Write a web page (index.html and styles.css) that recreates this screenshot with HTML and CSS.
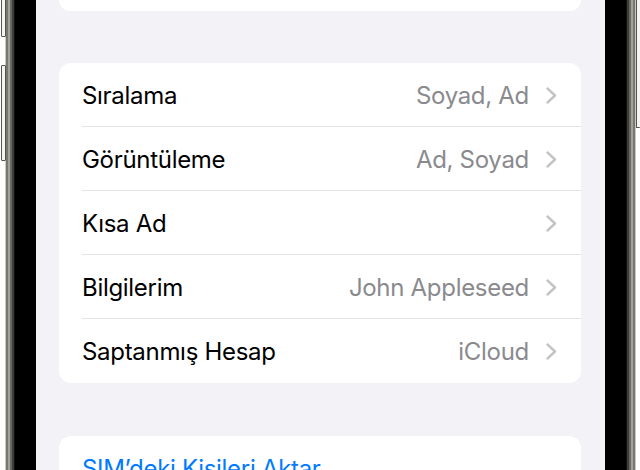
FILE: index.html
```html
<!DOCTYPE html>
<html lang="tr">
<head>
<meta charset="utf-8">
<link rel="stylesheet" href="styles.css">
</head>
<body>
<div class="phone">
  <div class="bezel bezel-left">
    <span class="btn btn-l1"></span>
    <span class="btn btn-l2"></span>
  </div>
  <main class="screen">
    <div class="card card-top"></div>
    <div class="card">
      <div class="row"><div class="row-inner"><span class="label">Sıralama</span><span class="value">Soyad, Ad</span><svg class="chev" viewBox="0 0 11 17" width="11" height="17"><path d="M1.5 1.5 L9 8.5 L1.5 15.5" fill="none" stroke="#c4c4c7" stroke-width="2.4" stroke-linecap="round" stroke-linejoin="round"/></svg></div></div>
      <div class="row"><div class="row-inner"><span class="label">Görüntüleme</span><span class="value">Ad, Soyad</span><svg class="chev" viewBox="0 0 11 17" width="11" height="17"><path d="M1.5 1.5 L9 8.5 L1.5 15.5" fill="none" stroke="#c4c4c7" stroke-width="2.4" stroke-linecap="round" stroke-linejoin="round"/></svg></div></div>
      <div class="row"><div class="row-inner"><span class="label">Kısa Ad</span><span class="value"></span><svg class="chev" viewBox="0 0 11 17" width="11" height="17"><path d="M1.5 1.5 L9 8.5 L1.5 15.5" fill="none" stroke="#c4c4c7" stroke-width="2.4" stroke-linecap="round" stroke-linejoin="round"/></svg></div></div>
      <div class="row"><div class="row-inner"><span class="label">Bilgilerim</span><span class="value">John Appleseed</span><svg class="chev" viewBox="0 0 11 17" width="11" height="17"><path d="M1.5 1.5 L9 8.5 L1.5 15.5" fill="none" stroke="#c4c4c7" stroke-width="2.4" stroke-linecap="round" stroke-linejoin="round"/></svg></div></div>
      <div class="row last"><div class="row-inner"><span class="label">Saptanmış Hesap</span><span class="value">iCloud</span><svg class="chev" viewBox="0 0 11 17" width="11" height="17"><path d="M1.5 1.5 L9 8.5 L1.5 15.5" fill="none" stroke="#c4c4c7" stroke-width="2.4" stroke-linecap="round" stroke-linejoin="round"/></svg></div></div>
    </div>
    <div class="card">
      <div class="row last"><div class="row-inner"><span class="label link">SIM’deki Kişileri Aktar</span></div></div>
    </div>
  </main>
  <div class="bezel bezel-right">
    <span class="btn btn-r1"></span>
  </div>
</div>
</body>
</html>
```
FILE: styles.css
```css
html, body {
  margin: 0;
  padding: 0;
  background: #fff;
}
body {
  width: 640px;
  height: 470px;
  overflow: hidden;
  font-family: Inter, "Noto Sans", sans-serif;
}
.phone {
  display: flex;
  height: 470px;
}
.bezel {
  position: relative;
  flex: 0 0 auto;
}
.bezel-left {
  width: 36px;
  background: linear-gradient(to right, #fff 0 5px, #c9c9c4 5px 6px, #77776f 6px 8px, #a3a39c 8px 10px, #6a6a64 10px 12px, #3c3c39 12px 14px, #111 14px 15px, #000 15px 36px);
}
.bezel-right {
  width: 35px;
  background: linear-gradient(to right, #000 0 21px, #111 21px 22px, #3c3c39 22px 24px, #6a6a64 24px 26px, #a3a39c 26px 28px, #77776f 28px 30px, #c9c9c4 30px 31px, #fff 31px 35px);
}
.btn {
  position: absolute;
  width: 3px;
  background: #f4f4f2;
  border: 1px solid #55554f;
  border-radius: 1px;
}
.btn-l1 { left: 1px; top: -4px; height: 39px; }
.btn-l2 { left: 1px; top: 65px; height: 94px; }
.btn-r1 { right: 0; top: -4px; height: 130px; border-right: none; }
.screen {
  flex: 1 1 auto;
  background: #f2f2f7;
  padding: 0 24px 0 23px;
  display: flex;
  flex-direction: column;
  gap: 52px;
  overflow: hidden;
}
.card {
  background: #fff;
  border-radius: 12px;
  flex: 0 0 auto;
}
.card-top {
  height: 11px;
  border-radius: 0 0 12px 12px;
}
.card + .card + .card { margin-top: 1px; }
.row {
  padding-left: 23px;
  height: 64px;
  box-sizing: border-box;
}
.row-inner {
  height: 64px;
  box-sizing: border-box;
  border-bottom: 1px solid #e2e2e7;
  padding-top: 2px;
  display: flex;
  align-items: center;
  padding-right: 24px;
  font-size: 24px;
  letter-spacing: -0.3px;
}
.row.last .row-inner { border-bottom: none; padding-top: 1px; }
.label {
  color: #000;
  flex: 1 1 auto;
}
.label.link { color: #007aff; }
.value {
  color: #8a8a8e;
  margin-right: 17px;
}
.chev { flex: 0 0 auto; }
```
